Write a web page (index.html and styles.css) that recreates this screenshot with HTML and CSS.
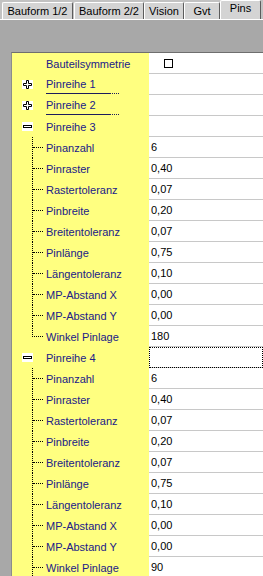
FILE: index.html
```html
<!DOCTYPE html>
<html lang="de">
<head>
  <meta charset="UTF-8">
  <meta name="viewport" content="width=device-width, initial-scale=1.0">
  <title>Pins</title>
  <link rel="stylesheet" href="styles.css">
</head>
<body>
  <div class="tabs">
    <div class="tab t1">Bauform 1/2</div>
    <div class="tab t2">Bauform 2/2</div>
    <div class="tab t3">Vision</div>
    <div class="tab t4">Gvt</div>
    <div class="tab t5 active">Pins</div>
  </div>

  <div class="page">
    <div class="grid">
      <div class="row">
        <div class="name top"><span class="text">Bauteilsymmetrie</span></div>
        <div class="value"><span class="check"></span></div>
      </div>

      <div class="row">
        <div class="name group">
          <svg class="toggle" width="11" height="9" viewBox="0 0 11 9"><rect width="11" height="9" fill="#fff"/><path d="M4.5 0.5H6.5V3.5H9.5V5.5H6.5V8.5H4.5V5.5H1.5V3.5H4.5Z" fill="#fff" stroke="#000"/></svg>
          <span class="text uline">Pinreihe 1</span>
        </div>
        <div class="value"></div>
      </div>

      <div class="row">
        <div class="name group">
          <svg class="toggle" width="11" height="9" viewBox="0 0 11 9"><rect width="11" height="9" fill="#fff"/><path d="M4.5 0.5H6.5V3.5H9.5V5.5H6.5V8.5H4.5V5.5H1.5V3.5H4.5Z" fill="#fff" stroke="#000"/></svg>
          <span class="text uline">Pinreihe 2</span>
        </div>
        <div class="value"></div>
      </div>

      <div class="row">
        <div class="name group">
          <svg class="toggle" width="11" height="9" viewBox="0 0 11 9"><rect width="11" height="9" fill="#fff"/><rect x="1.5" y="3.5" width="8" height="2" fill="#fff" stroke="#000"/></svg>
          <span class="text">Pinreihe 3</span>
        </div>
        <div class="value"></div>
      </div>
      <div class="row"><div class="name child"><span class="branch"></span><span class="text">Pinanzahl</span></div><div class="value">6</div></div>
      <div class="row"><div class="name child"><span class="branch"></span><span class="text">Pinraster</span></div><div class="value">0,40</div></div>
      <div class="row"><div class="name child"><span class="branch"></span><span class="text">Rastertoleranz</span></div><div class="value">0,07</div></div>
      <div class="row"><div class="name child"><span class="branch"></span><span class="text">Pinbreite</span></div><div class="value">0,20</div></div>
      <div class="row"><div class="name child"><span class="branch"></span><span class="text">Breitentoleranz</span></div><div class="value">0,07</div></div>
      <div class="row"><div class="name child"><span class="branch"></span><span class="text">Pinlänge</span></div><div class="value">0,75</div></div>
      <div class="row"><div class="name child"><span class="branch"></span><span class="text">Längentoleranz</span></div><div class="value">0,10</div></div>
      <div class="row"><div class="name child"><span class="branch"></span><span class="text">MP-Abstand X</span></div><div class="value">0,00</div></div>
      <div class="row"><div class="name child"><span class="branch"></span><span class="text">MP-Abstand Y</span></div><div class="value">0,00</div></div>
      <div class="row"><div class="name child"><span class="branch last"></span><span class="text">Winkel Pinlage</span></div><div class="value">180</div></div>

      <div class="row">
        <div class="name group">
          <svg class="toggle" width="11" height="9" viewBox="0 0 11 9"><rect width="11" height="9" fill="#fff"/><rect x="1.5" y="3.5" width="8" height="2" fill="#fff" stroke="#000"/></svg>
          <span class="text">Pinreihe 4</span>
        </div>
        <div class="value focus"></div>
      </div>
      <div class="row"><div class="name child"><span class="branch"></span><span class="text">Pinanzahl</span></div><div class="value">6</div></div>
      <div class="row"><div class="name child"><span class="branch"></span><span class="text">Pinraster</span></div><div class="value">0,40</div></div>
      <div class="row"><div class="name child"><span class="branch"></span><span class="text">Rastertoleranz</span></div><div class="value">0,07</div></div>
      <div class="row"><div class="name child"><span class="branch"></span><span class="text">Pinbreite</span></div><div class="value">0,20</div></div>
      <div class="row"><div class="name child"><span class="branch"></span><span class="text">Breitentoleranz</span></div><div class="value">0,07</div></div>
      <div class="row"><div class="name child"><span class="branch"></span><span class="text">Pinlänge</span></div><div class="value">0,75</div></div>
      <div class="row"><div class="name child"><span class="branch"></span><span class="text">Längentoleranz</span></div><div class="value">0,10</div></div>
      <div class="row"><div class="name child"><span class="branch"></span><span class="text">MP-Abstand X</span></div><div class="value">0,00</div></div>
      <div class="row"><div class="name child"><span class="branch"></span><span class="text">MP-Abstand Y</span></div><div class="value">0,00</div></div>
      <div class="row"><div class="name child"><span class="branch"></span><span class="text">Winkel Pinlage</span></div><div class="value">90</div></div>
    </div>
  </div>
</body>
</html>
```

FILE: styles.css
```css
body {
  margin: 0;
  font-family: "Liberation Sans", Arial, sans-serif;
  font-size: 11px;
  background: #a8a8a8;
  overflow: hidden;
}

.tabs {
  display: flex;
  align-items: flex-end;
  height: 19px;
  padding-left: 2px;
  border-bottom: 1px solid #fff;
  background: #c2c2c2;
}

.tab {
  box-sizing: border-box;
  height: 17px;
  line-height: 16px;
  text-align: center;
  color: #000;
  background: #d4d4d4;
  border: 1px solid #fff;
  border-right-color: #5c5c5c;
  border-bottom: none;
  border-radius: 2px 2px 0 0;
}

.t1 { width: 71px; }
.t2 { width: 70px; margin-left: 1px; }
.t3 { width: 40px; }
.t4 { width: 36px; }
.t5 { width: 41px; }

.tab.active {
  height: 19px;
  line-height: 14px;
}

.page {
  padding: 32px 0 0 11px;
}

.grid {
  border-top: 1px solid #6e6e6e;
  border-left: 1px solid #8c8c8c;
}

.row {
  display: flex;
  height: 21px;
}

.name {
  flex: none;
  box-sizing: border-box;
  width: 137px;
  display: flex;
  align-items: center;
  background: #ffff80;
  color: #202088;
  white-space: nowrap;
}

.value {
  flex: 1;
  box-sizing: border-box;
  display: flex;
  align-items: center;
  padding-left: 2px;
  background: #fff;
  border-bottom: 1px solid #c8c8c8;
  color: #000;
}

.value.focus {
  outline: 1px dotted #000;
  outline-offset: -1px;
}

.check {
  box-sizing: border-box;
  width: 9px;
  height: 9px;
  margin: 1px 0 0 13px;
  border: 1px solid #000;
}

/* tree */
.name.top {
  padding-left: 34px;
}

.name.group {
  padding-left: 10px;
}

.toggle {
  display: block;
  flex: none;
  margin-right: 13px;
}

.uline {
  align-self: flex-start;
  display: flex;
  align-items: center;
  width: 74px;
  height: 20px;
  background:
    linear-gradient(#1c1c5c, #1c1c5c) no-repeat 0 100% / 64px 1px,
    repeating-linear-gradient(90deg, #1c1c5c 0 1px, transparent 1px 2px) no-repeat 64px 100% / 10px 1px;
}

.name.child {
  padding-left: 20px;
}

.branch {
  flex: none;
  align-self: stretch;
  width: 10px;
  margin-right: 3px;
  border-left: 1px dotted #000;
}

.branch::before {
  content: "";
  display: block;
  height: 10px;
  border-bottom: 1px dotted #000;
}

.branch.last {
  width: 11px;
  border-left: none;
}

.branch.last::before {
  border-left: 1px dotted #000;
}
```
